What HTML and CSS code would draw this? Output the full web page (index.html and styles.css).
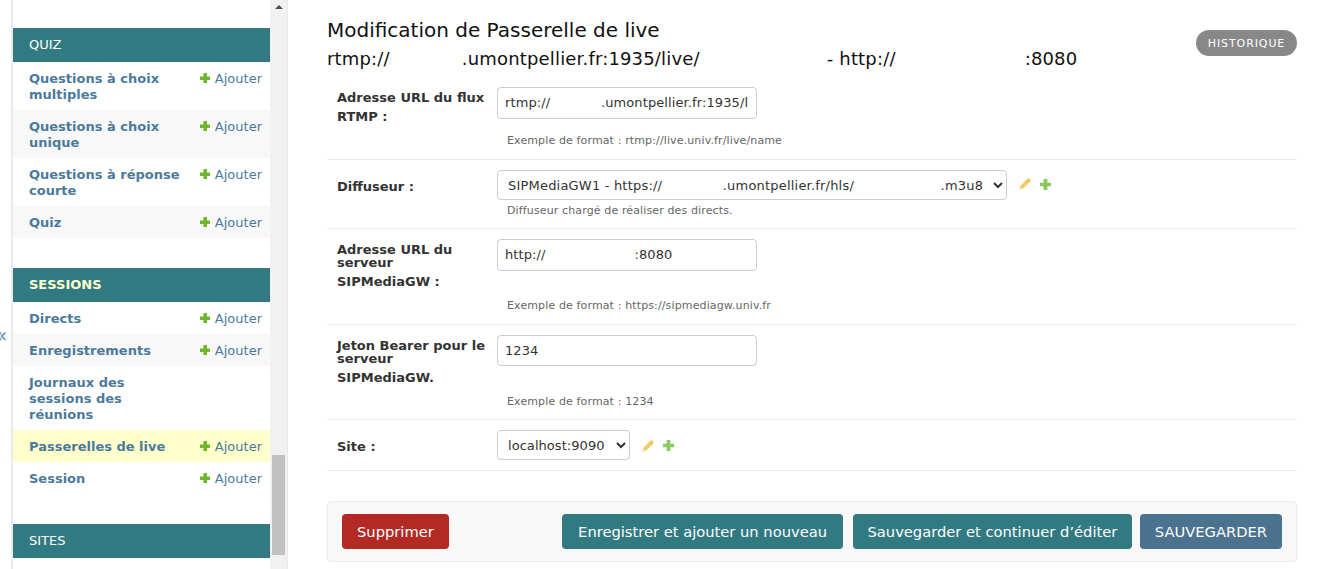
FILE: index.html
```html
<!DOCTYPE html>
<html lang="fr">
<head>
<meta charset="utf-8">
<title>Modification de Passerelle de live</title>
<link rel="stylesheet" href="styles.css">
</head>
<body>
<svg class="defs" width="0" height="0" aria-hidden="true">
  <symbol id="plus" viewBox="0 0 10 10"><path d="M3.3 0h3.4v3.3H10v3.4H6.7V10H3.3V6.7H0V3.3h3.3z"/></symbol>
  <symbol id="pencil" viewBox="0 0 12 12"><path d="M0.3 11.7 1.2 8.2 8.6 0.8a1.2 1.2 0 0 1 1.7 0l0.9 0.9a1.2 1.2 0 0 1 0 1.7L3.8 10.8z"/><path class="pencil-tip" d="M1.6 8.6 3.4 10.4 1 11z"/><path class="pencil-line" d="M3.2 8.8 8.8 3.2"/></symbol>
</svg>
<div class="page">
  <div class="toggle">«</div>
  <aside class="sidebar">
    <nav class="nav">
      <section class="app">
        <h2 class="app-title">QUIZ</h2>
        <div class="model"><a class="model-name">Questions à choix multiples</a><a class="add"><svg class="add-icon"><use href="#plus"/></svg>Ajouter</a></div>
        <div class="model alt"><a class="model-name">Questions à choix unique</a><a class="add"><svg class="add-icon"><use href="#plus"/></svg>Ajouter</a></div>
        <div class="model"><a class="model-name">Questions à réponse courte</a><a class="add"><svg class="add-icon"><use href="#plus"/></svg>Ajouter</a></div>
        <div class="model alt"><a class="model-name">Quiz</a><a class="add"><svg class="add-icon"><use href="#plus"/></svg>Ajouter</a></div>
      </section>
      <section class="app">
        <h2 class="app-title current">SESSIONS</h2>
        <div class="model"><a class="model-name">Directs</a><a class="add"><svg class="add-icon"><use href="#plus"/></svg>Ajouter</a></div>
        <div class="model alt"><a class="model-name">Enregistrements</a><a class="add"><svg class="add-icon"><use href="#plus"/></svg>Ajouter</a></div>
        <div class="model"><a class="model-name narrow">Journaux des sessions des réunions</a></div>
        <div class="model selected"><a class="model-name">Passerelles de live</a><a class="add"><svg class="add-icon"><use href="#plus"/></svg>Ajouter</a></div>
        <div class="model"><a class="model-name">Session</a><a class="add"><svg class="add-icon"><use href="#plus"/></svg>Ajouter</a></div>
      </section>
      <section class="app">
        <h2 class="app-title">SITES</h2>
        <div class="model"><a class="model-name">Sites</a><a class="add"><svg class="add-icon"><use href="#plus"/></svg>Ajouter</a></div>
      </section>
    </nav>
    <div class="scrollbar"><span class="scroll-arrow"></span><span class="scroll-thumb"></span></div>
  </aside>
  <main class="main">
    <header class="head">
      <div class="titles">
        <h1 class="title">Modification de Passerelle de live</h1>
        <h2 class="subtitle">rtmp://<span class="gap gap-a"></span>.umontpellier.fr:1935/live/<span class="gap gap-b"></span>- http://<span class="gap gap-c"></span>:8080</h2>
      </div>
      <a class="history">HISTORIQUE</a>
    </header>
    <form class="form">
      <div class="row row-first">
        <label class="label">Adresse URL du flux<span class="label-end">RTMP :</span></label>
        <div class="field">
          <input class="input" type="text" value="rtmp://&#160;&#160;&#160;&#160;&#160;&#160;&#160;&#160;&#160;&#160;&#160;&#160;.umontpellier.fr:1935/live/name">
          <p class="help help-gap">Exemple de format : rtmp://live.univ.fr/live/name</p>
        </div>
      </div>
      <div class="row row-select">
        <label class="label label-mid">Diffuseur :</label>
        <div class="field">
          <div class="control">
            <select class="select select-wide"><option>SIPMediaGW1 - https://&#160;&#160;&#160;&#160;&#160;&#160;&#160;&#160;&#160;&#160;&#160;&#160;&#160;&#160;.umontpellier.fr/hls/&#160;&#160;&#160;&#160;&#160;&#160;&#160;&#160;&#160;&#160;&#160;&#160;&#160;&#160;&#160;&#160;&#160;&#160;&#160;&#160;.m3u8</option></select>
            <svg class="edit-icon"><use href="#pencil"/></svg>
            <svg class="add-related"><use href="#plus"/></svg>
          </div>
          <p class="help help-tight">Diffuseur chargé de réaliser des directs.</p>
        </div>
      </div>
      <div class="row row-tall">
        <label class="label">Adresse URL du serveur<span class="label-end">SIPMediaGW :</span></label>
        <div class="field">
          <input class="input" type="text" value="http://&#160;&#160;&#160;&#160;&#160;&#160;&#160;&#160;&#160;&#160;&#160;&#160;&#160;&#160;&#160;&#160;&#160;&#160;&#160;&#160;&#160;:8080">
          <p class="help help-gap-tall">Exemple de format : https://sipmediagw.univ.fr</p>
        </div>
      </div>
      <div class="row row-tall">
        <label class="label">Jeton Bearer pour le serveur<span class="label-end">SIPMediaGW.</span></label>
        <div class="field">
          <input class="input input-short" type="text" value="1234">
          <p class="help help-gap-short">Exemple de format : 1234</p>
        </div>
      </div>
      <div class="row row-site">
        <label class="label label-mid">Site :</label>
        <div class="field">
          <div class="control control-site">
            <select class="select select-site"><option>localhost:9090</option></select>
            <svg class="edit-icon"><use href="#pencil"/></svg>
            <svg class="add-related"><use href="#plus"/></svg>
          </div>
        </div>
      </div>
    </form>
    <div class="actions">
      <a class="btn btn-delete">Supprimer</a>
      <div class="actions-right">
        <a class="btn btn-teal btn-wide">Enregistrer et ajouter un nouveau</a>
        <a class="btn btn-teal btn-narrow">Sauvegarder et continuer d’éditer</a>
        <a class="btn btn-save">SAUVEGARDER</a>
      </div>
    </div>
  </main>
</div>
</body>
</html>
```
FILE: styles.css
```css
* { box-sizing: border-box; }
html, body { margin: 0; padding: 0; height: 569px; overflow: hidden; background: #fff; }
body { font-family: "DejaVu Sans", Verdana, sans-serif; font-size: 13px; color: #333; }
.defs { position: absolute; }
.page { display: flex; height: 569px; overflow: hidden; }
.toggle { width: 11px; flex: none; overflow: hidden; color: #5b8fb0; font-size: 20px; line-height: 24px; padding-top: 323px; text-indent: -5px; }
.sidebar { display: flex; flex: none; width: 277px; height: 569px; border-left: 2px solid #eaeaea; border-right: 1px solid #eaeaea; }
.nav { width: 257px; padding-top: 28px; overflow: hidden; flex: none; }
.app { margin-bottom: 30px; }
.app-title { margin: 0; height: 34px; padding: 0 16px; background: #327a82; color: #fff; font-size: 13px; font-weight: 400; line-height: 34px; }
.app-title.current { color: #ffc; font-weight: 700; }
.model { display: flex; justify-content: space-between; padding: 9px 8px 7px 16px; line-height: 16px; }
.model.alt { background: #f8f8f8; }
.model.selected { background: #ffc; }
.model-name { font-weight: 700; color: #4c7a9c; width: 160px; }
.model-name.narrow { width: 125px; }
.add { color: #4c7a9c; white-space: nowrap; display: flex; align-items: flex-start; }
.add-icon { width: 10.5px; height: 10.5px; margin: 1.5px 4.5px 0 0; fill: #70b52b; }
.scrollbar { position: relative; flex: 1; background: #f1f1f1; }
.scroll-arrow { position: absolute; left: 5px; top: 5px; border: 4px solid transparent; border-top: 0; border-bottom: 4px solid #505050; }
.scroll-thumb { position: absolute; left: 2px; width: 13px; top: 455px; height: 100px; background: #c1c1c1; }
.main { flex: 1; min-width: 0; padding: 0 21px 0 39px; }
.head { display: flex; justify-content: space-between; align-items: flex-start; height: 78px; padding-top: 18px; }
.title { margin: 0; font-size: 20px; font-weight: 400; line-height: 24px; color: #111; }
.subtitle { margin: 5px 0 0; font-size: 18px; font-weight: 400; line-height: 24px; color: #111; white-space: nowrap; letter-spacing: .17px; }
.gap { display: inline-block; }
.gap-a { width: 72px; }
.gap-b { width: 127px; }
.gap-c { width: 129px; }
.history { margin-top: 12px; width: 101px; height: 26px; border-radius: 13px; background: #888; color: #fff; font-size: 11px; line-height: 27px; text-align: center; letter-spacing: .9px; }
.row { display: flex; padding: 0 10px; border-bottom: 1px solid #eaeaea; }
.row-first { height: 82px; padding-top: 9px; }
.row-select { height: 69px; padding-top: 10px; }
.row-tall { height: 96px; padding-top: 10px; }
.row-tall + .row-tall { height: 95px; }
.row-site { height: 51px; padding-top: 10px; }
.label { width: 160px; flex: none; font-weight: 700; line-height: 13px; padding-top: 4px; color: #333; }
.label-end { display: block; margin-top: 6px; }
.label-mid { padding-top: 10px; }
.input { display: block; width: 260px; height: 32px; padding: 0 7px 1px; border: 1px solid #ccc; border-radius: 4px; font: 13px "DejaVu Sans", Verdana, sans-serif; color: #333; background: #fff; letter-spacing: .1px; }
.input-short { height: 31px; padding-bottom: 0; }
.control { display: flex; align-items: center; }
.select { height: 30px; border: 1px solid #ccc; border-radius: 4px; padding: 0 6px; font: 13px "DejaVu Sans", Verdana, sans-serif; color: #333; background: #fff; letter-spacing: .2px; }
.select-wide { width: 510px; }
.select-site { width: 133px; letter-spacing: .05px; }
.edit-icon { width: 12px; height: 12px; margin: -2px 0 0 12px; fill: #efc550; }
.pencil-tip { fill: #fbeecb; }
.pencil-line { fill: none; stroke: #f8dd93; stroke-width: 1px; }
.add-related { width: 11px; height: 11px; margin: -1px 0 0 9px; fill: #8cc95c; }
.control-site .edit-icon { margin-top: 1px; }
.control-site .add-related { margin-top: 1px; }
.help { margin: 5px 0 0 10px; font-size: 11px; line-height: 14px; color: #666; letter-spacing: .13px; }
.help-tight { margin-top: 4px; }
.help-gap { margin-top: 15px; }
.help-gap-tall { margin-top: 28px; }
.help-gap-short { margin-top: 29px; }
.actions { display: flex; justify-content: space-between; align-items: center; height: 61px; margin-top: 30px; padding: 0 14px; background: #f8f8f8; border: 1px solid #eaeaea; border-radius: 4px; }
.actions-right { display: flex; gap: 10px; }
.btn { height: 35px; padding: 0 15px; border-radius: 4px; color: #fff; font-size: 14.7px; line-height: 35px; white-space: nowrap; }
.btn-delete { background: #b32a25; }
.btn-teal { background: #327a82; }
.btn-wide { padding: 0 16px; }
.btn-narrow { padding: 0 14.5px; }
.btn-save { background: #4b738f; margin-left: -2px; }
```
